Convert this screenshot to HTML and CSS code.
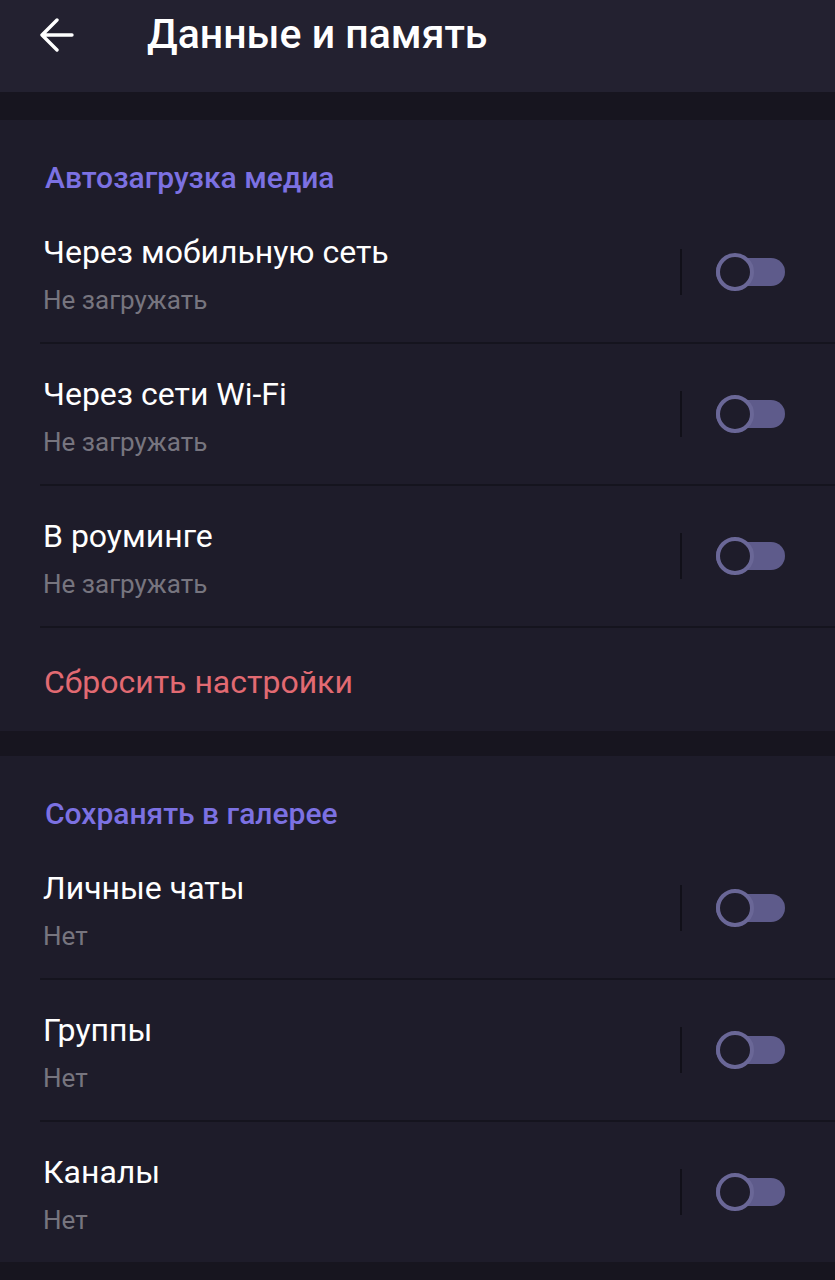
FILE: index.html
```html
<!DOCTYPE html>
<html lang="ru">
<head>
<meta charset="utf-8">
<title>Данные и память</title>
<link rel="stylesheet" href="styles.css">
</head>
<body>
<header class="topbar">
  <svg class="back" width="34" height="36" viewBox="0 0 34 36">
    <path d="M32 18 H3 M17 3 L2 18 L17 33" fill="none" stroke="#ffffff" stroke-width="3.4" stroke-linecap="round" stroke-linejoin="round"/>
  </svg>
  <h1 class="title">Данные и память</h1>
</header>
<main class="content">
  <section class="card">
    <h2 class="card-title">Автозагрузка медиа</h2>
    <div class="row">
      <div class="row-text"><div class="row-label">Через мобильную сеть</div><div class="row-sub">Не загружать</div></div>
      <div class="row-ctrl"><span class="vsep"></span><span class="toggle"><span class="knob"></span></span></div>
    </div>
    <div class="row">
      <div class="row-text"><div class="row-label">Через сети Wi-Fi</div><div class="row-sub">Не загружать</div></div>
      <div class="row-ctrl"><span class="vsep"></span><span class="toggle"><span class="knob"></span></span></div>
    </div>
    <div class="row">
      <div class="row-text"><div class="row-label">В роуминге</div><div class="row-sub">Не загружать</div></div>
      <div class="row-ctrl"><span class="vsep"></span><span class="toggle"><span class="knob"></span></span></div>
    </div>
    <div class="reset">Сбросить настройки</div>
  </section>
  <section class="card">
    <h2 class="card-title">Сохранять в галерее</h2>
    <div class="row">
      <div class="row-text"><div class="row-label">Личные чаты</div><div class="row-sub">Нет</div></div>
      <div class="row-ctrl"><span class="vsep"></span><span class="toggle"><span class="knob"></span></span></div>
    </div>
    <div class="row">
      <div class="row-text"><div class="row-label">Группы</div><div class="row-sub">Нет</div></div>
      <div class="row-ctrl"><span class="vsep"></span><span class="toggle"><span class="knob"></span></span></div>
    </div>
    <div class="row last">
      <div class="row-text"><div class="row-label">Каналы</div><div class="row-sub">Нет</div></div>
      <div class="row-ctrl"><span class="vsep"></span><span class="toggle"><span class="knob"></span></span></div>
    </div>
  </section>
</main>
</body>
</html>
```
FILE: styles.css
```css
html, body {
  margin: 0;
  padding: 0;
  background: #17151f;
  font-family: Roboto, "Noto Sans", "Liberation Sans", sans-serif;
  color: #ffffff;
}

.topbar {
  height: 92px;
  background: #232130;
  display: flex;
  align-items: flex-start;
  padding-left: 40px;
  box-sizing: border-box;
}

.back {
  display: block;
  margin-top: 17px;
}

.title {
  margin: 10px 0 0 73px;
  font-size: 41px;
  font-weight: 500;
  line-height: 48px;
  color: #ffffff;
}

.content {
  padding-top: 28px;
  display: flex;
  flex-direction: column;
  gap: 25px;
}

.card {
  background: #1e1c2a;
}

.card-title {
  margin: 0;
  height: 82px;
  box-sizing: border-box;
  padding: 40px 0 0 45px;
  font-size: 30px;
  line-height: 36px;
  font-weight: 500;
  color: #7c71e2;
}

.row {
  height: 142px;
  box-sizing: border-box;
  margin-left: 40px;
  padding-left: 3px;
  border-bottom: 2px solid #15141e;
  display: flex;
  align-items: center;
  justify-content: space-between;
}

.row.last {
  border-bottom: 0;
  height: 140px;
}

.row-text {
  padding-top: 5px;
  display: flex;
  flex-direction: column;
  gap: 13px;
}

.row-label {
  font-size: 32px;
  line-height: 38px;
  color: #ffffff;
}

.row-sub {
  font-size: 26px;
  line-height: 32px;
  color: #77757f;
}

.row-ctrl {
  display: flex;
  align-items: center;
  padding-right: 50px;
}

.vsep {
  width: 2px;
  height: 46px;
  background: #111019;
  margin-right: 34px;
}

.toggle {
  position: relative;
  width: 69px;
  height: 28px;
  border-radius: 14px;
  background: #5e5b8b;
  display: block;
}

.knob {
  position: absolute;
  left: 0;
  top: -5px;
  width: 30px;
  height: 30px;
  border-radius: 50%;
  border: 4px solid #6a6797;
  background: #1e1c2a;
}

.reset {
  height: 103px;
  box-sizing: border-box;
  padding: 35px 0 0 44px;
  font-size: 32px;
  line-height: 38px;
  color: #e26a72;
}
```
